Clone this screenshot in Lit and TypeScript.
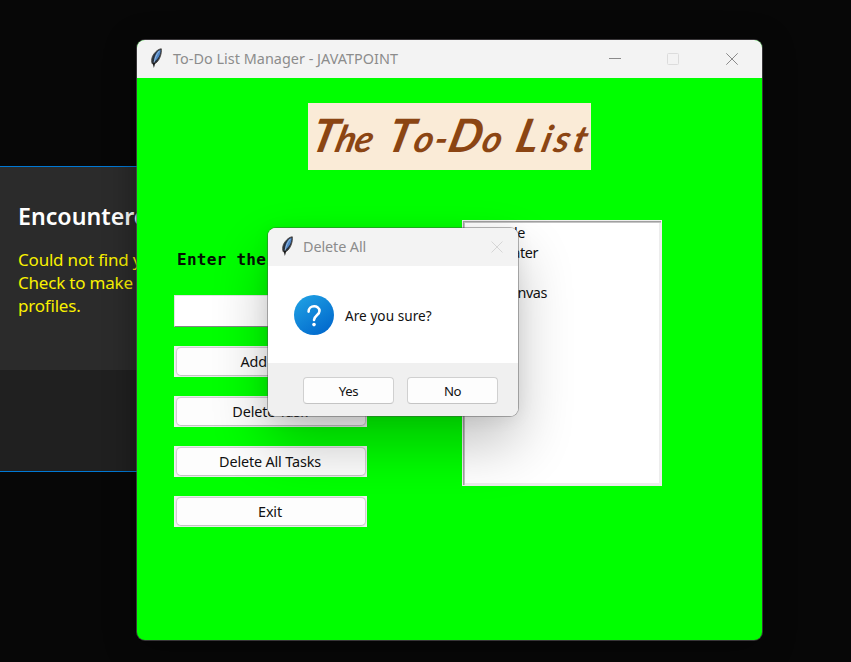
import { LitElement, html, css } from "lit";
import { customElement, property } from "lit/decorators.js";

@customElement("feather-icon")
class FeatherIcon extends LitElement {
  static styles = css`
    :host { display: block; width: 16px; height: 22px; }
    svg { display: block; }
  `;
  render() {
    return html`<svg width="16" height="22" viewBox="0 0 16 22">
      <path d="M12.3 .8 C9.5 .9 5.5 4.1 3.4 8.6 C2.4 11.4 2.4 13.8 3.2 15.8 L6.6 15.2 C10.6 12.6 12.9 5.6 12.3 .8 Z" fill="#28303b" stroke="#4a4744" stroke-width=".9" />
      <path d="M11.5 1.8 C8.8 2.6 6.4 5.8 5.5 9.8 L4.9 13.8 C9.2 11.6 11.9 5.9 11.5 1.8 Z" fill="#4f86c6" />
      <path d="M10.3 3 C7.6 5.9 6 10.2 5 14.6" fill="none" stroke="#9dbbdc" stroke-width=".9" />
      <path d="M3.6 14.8 L6.2 15 L4.9 20 Z" fill="#181818" />
    </svg>`;
  }
}

@customElement("tk-button")
class TkButton extends LitElement {
  @property() label = "";
  static styles = css`
    :host { display: block; box-sizing: border-box; width: 193px; height: 31px; padding: 1px 1px 1px 2px; background: #f0f0f0; }
    .face {
      box-sizing: border-box; height: 29px; border: 1px solid #d0d0d0; border-bottom-color: #c4c4c4; border-radius: 5px;
      background: #fdfdfd; box-shadow: 0 0 0 .5px #e2e2e2; text-align: center; padding-right: 2px;
      font: 14.4px/28px "Noto Sans", sans-serif; letter-spacing: -0.15px; color: #111;
    }
  `;
  render() {
    return html`<div class="face">${this.label}</div>`;
  }
}

@customElement("confirm-dialog")
class ConfirmDialog extends LitElement {
  static styles = css`
    :host {
      display: flex; flex-direction: column; width: 250px; height: 188px; border-radius: 8px; overflow: hidden; background: #fff;
      box-shadow: 0 0 0 1px rgba(70, 70, 70, .4), 0 28px 56px rgba(0, 0, 0, .24), 0 2px 18px rgba(0, 0, 0, .07);
      font-family: "Noto Sans", sans-serif;
    }
    .bar { display: flex; align-items: center; height: 38px; background: #f3f3f3; padding: 0 15px 0 12px; }
    .name { flex: 1; margin-left: 7px; padding-bottom: 2px; font-size: 14.4px; letter-spacing: -0.1px; color: #8c8c8c; }
    .body { display: flex; align-items: center; height: 97px; padding-left: 26px; gap: 11px; }
    .body svg { display: block; }
    .ask { font-size: 13.6px; letter-spacing: 0.04px; color: #111; padding-top: 1px; }
    .foot { display: flex; flex: 1; box-sizing: border-box; background: #f0f0f0; padding: 14px 20px 0 35px; gap: 13px; }
    .btn {
      box-sizing: border-box; width: 91px; height: 27px; border: 1px solid #d0d0d0; border-bottom-color: #c4c4c4;
      border-radius: 4px; background: #fdfdfd; text-align: center; font-size: 13.2px; line-height: 27px; letter-spacing: -0.4px; color: #111;
    }
  `;
  render() {
    return html`
      <div class="bar">
        <feather-icon></feather-icon>
        <span class="name">Delete All</span>
        <svg width="12" height="12" viewBox="0 0 12 12"><path d="M.5 .5 11.5 11.5 M11.5 .5 .5 11.5" stroke="#d6d6d6" /></svg>
      </div>
      <div class="body">
        <svg width="40" height="40" viewBox="0 0 40 40">
          <defs><linearGradient id="g" x1="0.1" y1="0" x2="0.8" y2="1"><stop offset="0" stop-color="#20a2e4" /><stop offset="1" stop-color="#0067cc" /></linearGradient></defs>
          <circle cx="20" cy="20" r="20" fill="url(#g)" />
          <path d="M14.6 16.6 C14.6 9.6 25.5 9.6 25.5 16 C25.5 20 20 20.4 20 25" fill="none" stroke="#fff" stroke-width="2.6" stroke-linecap="round" />
          <circle cx="20" cy="29.6" r="1.8" fill="#fff" />
        </svg>
        <span class="ask">Are you sure?</span>
      </div>
      <div class="foot"><div class="btn">Yes</div><div class="btn">No</div></div>
    `;
  }
}

@customElement("todo-window")
class TodoWindow extends LitElement {
  static styles = css`
    :host {
      display: flex; flex-direction: column; width: 625px; height: 600px; border-radius: 8px; overflow: hidden; background: #0f0;
      box-shadow: 0 0 0 1px rgba(90, 85, 90, .6), 0 6px 32px rgba(0, 0, 0, .4);
      font-family: "Noto Sans", sans-serif;
    }
    .bar { display: flex; align-items: center; height: 38px; background: #f3f3f3; padding: 0 24px 0 12px; }
    .name { flex: 1; margin-left: 8px; padding-bottom: 2px; font-size: 14.4px; letter-spacing: 0.03px; color: #8c8c8c; }
    .controls { display: flex; align-items: center; }
    .controls svg { display: block; margin-right: 46px; }
    .controls svg:nth-child(2) { margin-right: 47px; }
    .controls svg:last-child { margin-right: 0; }
    .banner {
      box-sizing: border-box; width: 283px; height: 67px; margin: 25px 0 0 171px; background: #faebd7; overflow: hidden;
      display: flex; align-items: flex-start; padding: 4px 0 0 1px; color: #8b4513; white-space: nowrap;
      font: italic 700 37px/56px "Lato", cursive;
    }
    .word { flex: none; transform: skewX(-14deg); transform-origin: 0 75%; }
    .w1 { width: 76px; letter-spacing: -1px; }
    .w2 { width: 129px; letter-spacing: 1.2px; }
    .w3 { width: 80px; letter-spacing: 3.6px; }
    .cap { font-size: 46px; }
    .main { display: flex; padding: 50px 0 0 37px; }
    .form { width: 193px; margin-right: 95px; }
    .prompt { margin: 27px 0 0 3px; height: 25px; font: 700 16px/25px "DejaVu Sans Mono", monospace; letter-spacing: .27px; white-space: nowrap; color: #041104; }
    .entry { box-sizing: border-box; height: 32px; margin: 23px 0 19px; background: #fff; border: 1px solid #e3e3e3; border-bottom: 1px solid #858585; }
    .stack { display: flex; flex-direction: column; gap: 19px; }
    .list {
      box-sizing: border-box; width: 200px; height: 266px; background: #fff; padding: 2px 1px 1px;
      border: 1px solid #ededed; box-shadow: inset 1px 1px 0 #a0a0a0, inset 2px 2px 0 #c4c4c4, inset -2px -2px 0 #ededed;
      font-size: 14.4px; line-height: 20px; letter-spacing: -0.4px; color: #111;
    }
    .row { height: 20px; text-align: right; }
  `;
  rows = [
    { text: "le", end: 61 },
    { text: "ater", end: 74 },
    { text: "", end: 0 },
    { text: "anvas", end: 83 },
  ];
  actions = ["Add Task", "Delete Task", "Delete All Tasks", "Exit"];
  render() {
    return html`
      <div class="bar">
        <feather-icon></feather-icon>
        <span class="name">To-Do List Manager - JAVATPOINT</span>
        <div class="controls">
          <svg width="12" height="12" viewBox="0 0 12 12"><path d="M0 5.5H12" stroke="#8a8a8a" /></svg>
          <svg width="12" height="12" viewBox="0 0 12 12"><rect x=".5" y=".5" width="11" height="11" rx="1" fill="none" stroke="#dcdcdc" /></svg>
          <svg width="12" height="12" viewBox="0 0 12 12"><path d="M.3 .3 11.7 11.7 M11.7 .3 .3 11.7" stroke="#8a8a8a" /></svg>
        </div>
      </div>
      <div class="banner">
        <span class="word w1"><span class="cap">T</span>he</span>
        <span class="word w2"><span class="cap">T</span>o-<span class="cap">D</span>o</span>
        <span class="word w3"><span class="cap">L</span>ist</span>
      </div>
      <div class="main">
        <div class="form">
          <div class="prompt">Enter the</div>
          <div class="entry"></div>
          <div class="stack">${this.actions.map((a) => html`<tk-button label=${a}></tk-button>`)}</div>
        </div>
        <div class="list">${this.rows.map((r) => html`<div class="row" style="width:${r.end}px">${r.text}</div>`)}</div>
      </div>
    `;
  }
}

@customElement("app-root")
class AppRoot extends LitElement {
  static styles = css`
    :host { display: block; position: relative; width: 851px; height: 662px; overflow: hidden; background: #070707; font-family: "Noto Sans", sans-serif; }
    .notice {
      position: absolute; left: 0; top: 166px; box-sizing: border-box; width: 400px; height: 306px;
      border-top: 1px solid #0078d4; border-bottom: 1px solid #0078d4; background: #202020;
    }
    .message { box-sizing: border-box; height: 203px; background: #2b2b2b; padding: 31px 0 0 18px; }
    .heading { font-size: 23.2px; line-height: 36px; font-weight: 600; letter-spacing: 0; color: #fff; white-space: nowrap; }
    .detail { margin-top: 14px; font-size: 17px; line-height: 23px; letter-spacing: -0.2px; color: #f9f100; white-space: nowrap; }
    todo-window { position: absolute; left: 137px; top: 40px; }
    confirm-dialog { position: absolute; left: 268px; top: 228px; }
  `;
  render() {
    return html`
      <div class="notice">
        <div class="message">
          <div class="heading">Encountered</div>
          <div class="detail">Could not find y<br />Check to make<br />profiles.</div>
        </div>
      </div>
      <todo-window></todo-window>
      <confirm-dialog></confirm-dialog>
    `;
  }
}
